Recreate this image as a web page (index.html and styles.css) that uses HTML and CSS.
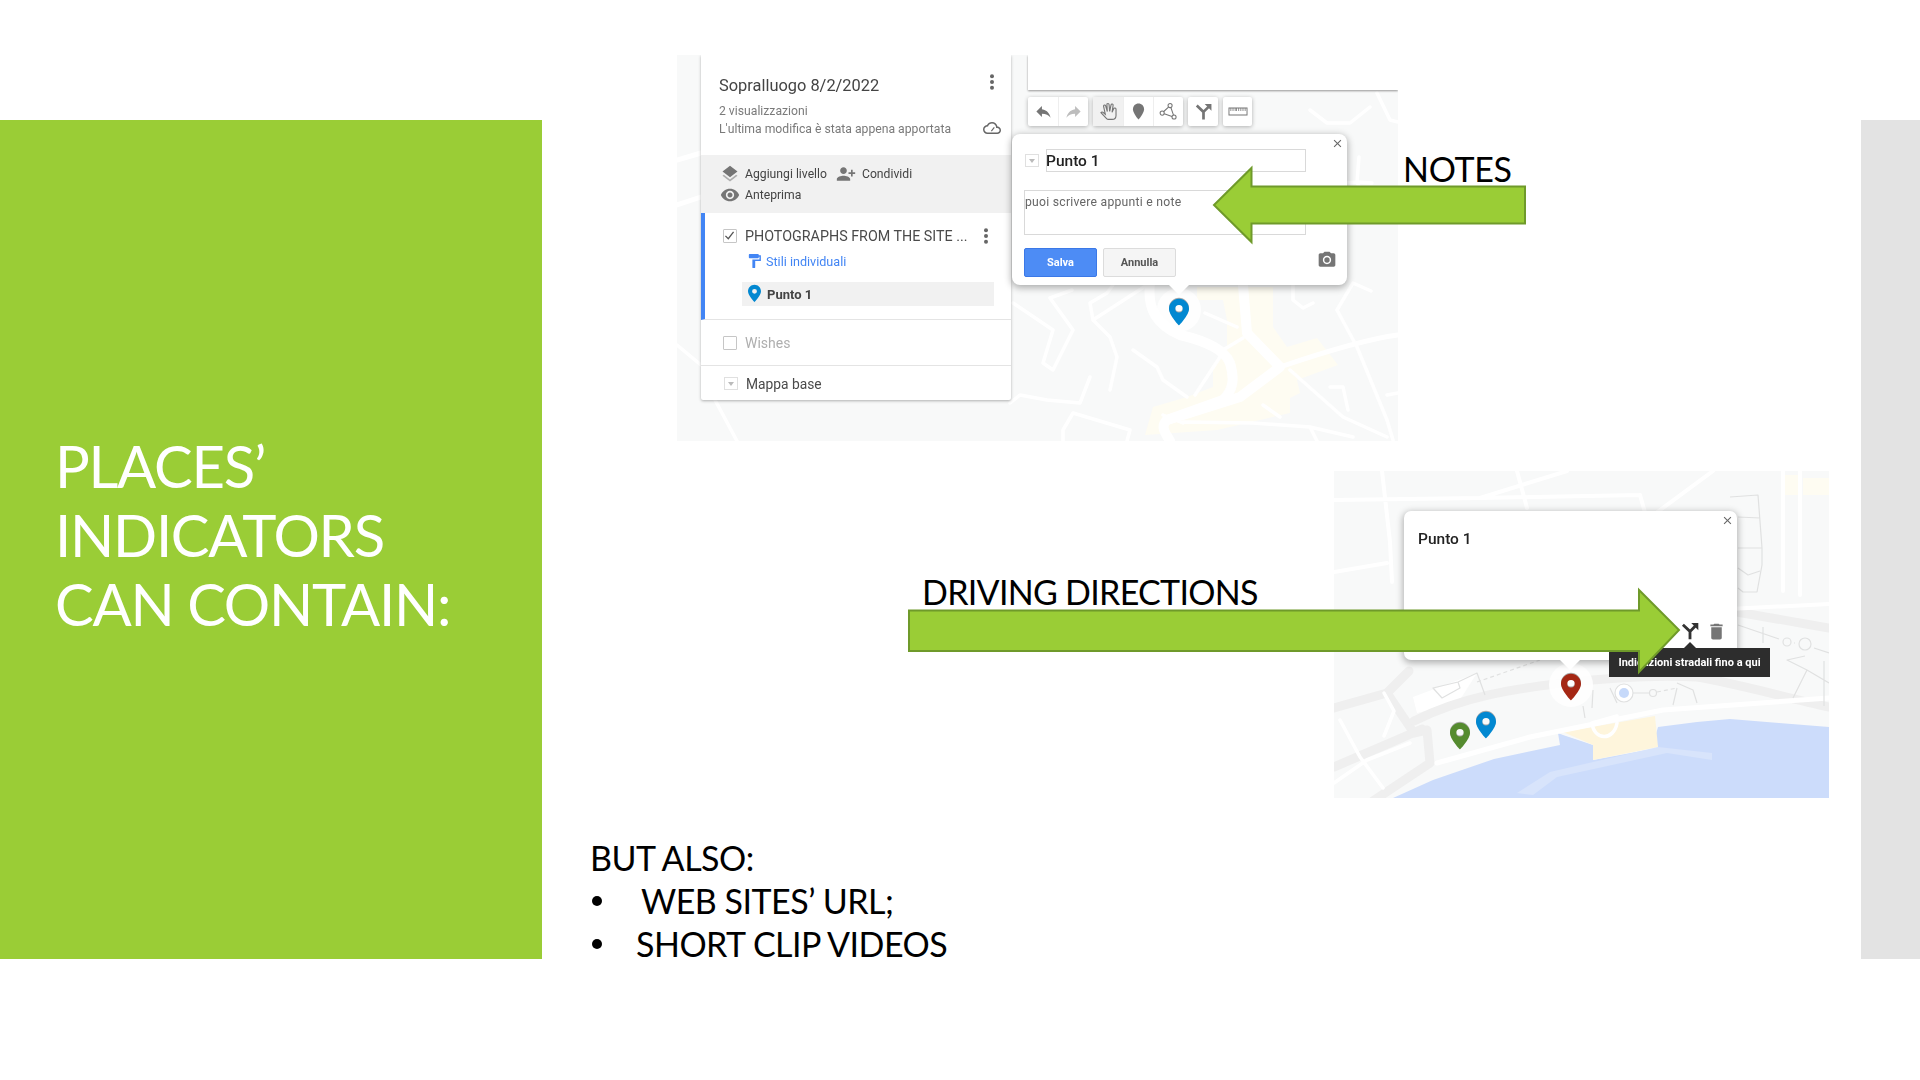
FILE: index.html
```html
<!DOCTYPE html>
<html lang="en">
<head>
<meta charset="utf-8">
<title>Places' indicators</title>
<link rel="stylesheet" href="styles.css">
</head>
<body>
<svg class="defs" width="0" height="0" aria-hidden="true">
  <symbol id="i-more" viewBox="0 0 24 24"><circle cx="12" cy="5" r="2.4"/><circle cx="12" cy="12" r="2.4"/><circle cx="12" cy="19" r="2.4"/></symbol>
  <symbol id="i-cloud" viewBox="0 0 24 24"><path d="M19.35 10.04C18.67 6.59 15.64 4 12 4 9.11 4 6.6 5.64 5.35 8.04 2.34 8.36 0 10.91 0 14c0 3.31 2.69 6 6 6h13c2.76 0 5-2.24 5-5 0-2.64-2.05-4.78-4.65-4.96zM19 18H6c-2.21 0-4-1.79-4-4s1.79-4 4-4h.71C7.37 7.69 9.48 6 12 6c3.04 0 5.5 2.46 5.5 5.5v.5H19c1.66 0 3 1.34 3 3s-1.34 3-3 3z"/><path d="M10.5 15.5l4-5 1.2 1-4 5.2z"/></symbol>
  <symbol id="i-layers" viewBox="0 0 24 24"><path opacity=".55" d="M11.99 18.54l-7.37-5.73L3 14.07l9 7 9-7-1.63-1.27-7.38 5.74z"/><path d="M12 16l7.36-5.73L21 9l-9-7-9 7 1.63 1.27L12 16z"/></symbol>
  <symbol id="i-person" viewBox="0 0 24 24"><path transform="matrix(-1 0 0 1 24 0)" d="M15 12c2.21 0 4-1.79 4-4s-1.79-4-4-4-4 1.79-4 4 1.79 4 4 4zm-9-2V7H4v3H1v2h3v3h2v-3h3v-2H6zm9 4c-2.67 0-8 1.34-8 4v2h16v-2c0-2.66-5.33-4-8-4z"/></symbol>
  <symbol id="i-eye" viewBox="0 0 24 24"><path d="M12 4.5C7 4.5 2.73 7.61 1 12c1.73 4.39 6 7.5 11 7.5s9.27-3.11 11-7.5c-1.73-4.39-6-7.5-11-7.5zM12 17c-2.76 0-5-2.24-5-5s2.24-5 5-5 5 2.24 5 5-2.24 5-5 5zm0-8c-1.66 0-3 1.34-3 3s1.34 3 3 3 3-1.34 3-3-1.34-3-3-3z"/></symbol>
  <symbol id="i-paint" viewBox="0 0 24 24"><path d="M18 4V3c0-.55-.45-1-1-1H5c-.55 0-1 .45-1 1v4c0 .55.45 1 1 1h12c.55 0 1-.45 1-1V6h1v4H9v11c0 .55.45 1 1 1h2c.55 0 1-.45 1-1v-9h8V4h-3z"/></symbol>
  <symbol id="i-pin" viewBox="0 0 24 32"><path fill-rule="evenodd" d="M12 0C5.4 0 0 5.3 0 12c0 8 12 20 12 20s12-12 12-20C24 5.3 18.6 0 12 0zm0 16.5a4.5 4.5 0 1 1 0-9 4.5 4.5 0 0 1 0 9z"/></symbol>
  <symbol id="i-reply" viewBox="0 0 24 24"><path d="M10 9V5l-7 7 7 7v-4.1c5 0 8.5 1.6 11 5.1-1-5-4-10-11-11z"/></symbol>
  <symbol id="i-fwd" viewBox="0 0 24 24"><path d="M14 9V5l7 7-7 7v-4.1c-5 0-8.5 1.6-11 5.1 1-5 4-10 11-11z"/></symbol>
  <symbol id="i-hand" viewBox="0 0 24 24"><path fill="none" stroke="currentColor" stroke-width="1.4" d="M21.5 9v8c0 3-2.3 5-5 5H12c-1 0-2-.5-2.700-1.300L2.500 13.500c.6-.8 1.600-1 2.400-.5L8 15.500 5.800 5.500c-.4-1.800 2.100-2.300 2.600-.5L10.500 12 10 3.300c-.1-1.900 2.600-2 2.700-.1L13.500 12l1.700-8.300c.4-1.800 3-1.300 2.600.5L16.500 13l2-4.500c.7-1.600 3-.9 3 .5z"/></symbol>
  <symbol id="i-drop" viewBox="0 0 24 24"><path d="M12 2C8.130 2 5 5.130 5 9c0 5.250 7 13 7 13s7-7.750 7-13c0-3.870-3.130-7-7-7z"/></symbol>
  <symbol id="i-poly" viewBox="0 0 24 24"><g fill="none" stroke="currentColor" stroke-width="1.3"><circle cx="14" cy="4.500" r="2.600"/><circle cx="4" cy="14" r="2.600"/><circle cx="19" cy="19" r="2.600"/><path d="M12 6.500 6 12M15 7l3.300 9.500M6.600 14.800 16.400 18.200"/></g></symbol>
  <symbol id="i-fork" viewBox="0 0 24 24"><path fill="none" stroke="currentColor" stroke-width="3.4" d="M3.500 4.500l8.500 8V22M12 12.500l7-7"/><path d="M13.500 2.500H22V11z"/></symbol>
  <symbol id="i-ruler" viewBox="0 0 24 24"><path fill-rule="evenodd" d="M0 7h24v10H0zm1.200 1.200v7.600h21.600V8.200h-1.300v3.300h-1V8.200h-1.700v3.300h-1V8.200h-1.700v3.300h-1V8.200h-1.700v3.300h-1V8.200h-1.700v3.300h-1V8.200H8.900v3.300h-1V8.200H6.200v3.300h-1V8.200H3.500v3.300h-1V8.200z"/></symbol>
  <symbol id="i-camera" viewBox="0 0 24 24"><path d="M9 2L7.170 4H4c-1.100 0-2 .9-2 2v12c0 1.100.9 2 2 2h16c1.100 0 2-.9 2-2V6c0-1.100-.9-2-2-2h-3.170L15 2H9zm3 15c-2.760 0-5-2.240-5-5s2.240-5 5-5 5 2.240 5 5-2.240 5-5 5z"/><circle cx="12" cy="12" r="3.200"/></symbol>
  <symbol id="i-close" viewBox="0 0 24 24"><path d="M19 6.410L17.590 5 12 10.590 6.410 5 5 6.410 10.590 12 5 17.590 6.410 19 12 13.410 17.590 19 19 17.590 13.410 12z"/></symbol>
  <symbol id="i-trash" viewBox="0 0 24 24"><path d="M6 19c0 1.100.9 2 2 2h8c1.100 0 2-.9 2-2V7H6v12zM19 4h-3.500l-1-1h-5l-1 1H5v2h14V4z"/></symbol>
</svg>

<main class="slide">
  <aside class="panel">
    <h1 class="panel-title">PLACES’<br>INDICATORS<br>CAN CONTAIN:</h1>
  </aside>
  <div class="edge"></div>

  <section class="shot shot-a">
    <svg class="roads" viewBox="0 0 721 386" preserveAspectRatio="none" aria-hidden="true">
      <path class="area-y" d="M520 232 596 232 596 272 610 292 640 283 661 310 620 325 623 338 613 343 613 358 540 375 468 380 476 352 510 342 536 332 536 312 550 292 550 265 546 245 520 245z"/>
      <g class="road">
        <path d="M473 228C470 255 480 270 503 280 530 286 548 296 553 308 558 325 556 335 546 345L490 365C482 372 490 380 493 386"/>
        <path d="M566 230 570 278 603 312 563 342 490 365"/>
      </g>
      <g class="road mid">
        <path d="M603 312C650 296 690 284 721 280"/>
        <path d="M0 105 24 98M0 150 24 142"/>
      </g>
      <g class="road thin">
        <path d="M613 315 666 362 710 382M680 292 710 365 716 385M660 255 676 228 694 236M660 255 680 292"/>
        <path d="M546 295 566 283M543 302 518 340M456 295 480 312 486 325 510 342"/>
        <path d="M416 265 433 282 440 302 433 335M416 265 413 248 430 238 436 230M416 265 470 230"/>
        <path d="M373 243 396 275 376 315 366 308 376 275 336 248M373 243 395 235"/>
        <path d="M413 322 403 348 370 345 343 340 333 348M396 358 453 375 450 386M396 358 386 375 386 386"/>
        <path d="M486 360 506 368M586 350 603 362M506 367 576 368 633 372 676 382M633 372 640 386"/>
        <path d="M616 230 616 245 626 253 636 248M653 332 666 332 671 355M710 340 721 338M528 258 560 272"/>
        <path d="M700 38 713 65 721 67M633 55 650 68 673 68 693 52M682 102 680 127 668 128M680 127 695 128M680 127 690 150M30 180 50 200 60 250M0 290 24 310M60 386 30 330"/>
      </g>
      <circle class="halo" cx="502" cy="255" r="22"/>
    </svg>

    <div class="sidebar">
      <header class="doc">
        <div class="doc-row doc-row-title">
          <h2 class="doc-title">Sopralluogo 8/2/2022</h2>
          <svg class="ico dots"><use href="#i-more"/></svg>
        </div>
        <p class="doc-meta">2 visualizzazioni</p>
        <div class="doc-row">
          <p class="doc-meta">L'ultima modifica è stata appena apportata</p>
          <svg class="ico cloud"><use href="#i-cloud"/></svg>
        </div>
      </header>
      <div class="actions">
        <div class="action-row">
          <svg class="ico act"><use href="#i-layers"/></svg><span>Aggiungi livello</span>
          <svg class="ico act person"><use href="#i-person"/></svg><span>Condividi</span>
        </div>
        <div class="action-row">
          <svg class="ico act"><use href="#i-eye"/></svg><span>Anteprima</span>
        </div>
      </div>
      <div class="layer">
        <div class="layer-head">
          <span class="check on"><svg viewBox="0 0 16 16"><path d="M3 8.500 6.500 12 13 3.500"/></svg></span>
          <span class="layer-name">PHOTOGRAPHS FROM THE SITE ...</span>
          <svg class="ico dots"><use href="#i-more"/></svg>
        </div>
        <div class="styles-link"><svg class="ico paint"><use href="#i-paint"/></svg><span>Stili individuali</span></div>
        <div class="place"><svg class="ico place-pin"><use href="#i-pin"/></svg><span>Punto 1</span></div>
      </div>
      <div class="wishes"><span class="check"></span><span>Wishes</span></div>
      <div class="basemap"><span class="caret"></span><span>Mappa base</span></div>
    </div>

    <div class="searchbar"></div>
    <div class="tools">
      <div class="tool-group">
        <span class="tool"><svg class="ico"><use href="#i-reply"/></svg></span>
        <span class="tool faded"><svg class="ico"><use href="#i-fwd"/></svg></span>
      </div>
      <div class="tool-group">
        <span class="tool active"><svg class="ico"><use href="#i-hand"/></svg></span>
        <span class="tool"><svg class="ico"><use href="#i-drop"/></svg></span>
        <span class="tool"><svg class="ico"><use href="#i-poly"/></svg></span>
      </div>
      <div class="tool-group">
        <span class="tool"><svg class="ico"><use href="#i-fork"/></svg></span>
      </div>
      <div class="tool-group">
        <span class="tool wide"><svg class="ico"><use href="#i-ruler"/></svg></span>
      </div>
    </div>

    <div class="editor">
      <svg class="ico close"><use href="#i-close"/></svg>
      <div class="editor-title"><span class="caret"></span><div class="field title-field">Punto 1</div></div>
      <div class="field note-field">puoi scrivere appunti e note</div>
      <div class="editor-actions">
        <span class="btn primary">Salva</span>
        <span class="btn">Annulla</span>
        <svg class="ico camera"><use href="#i-camera"/></svg>
      </div>
      <span class="tail"></span>
    </div>
    <svg class="ico marker marker-a"><use href="#i-pin"/></svg>
  </section>

  <section class="shot shot-b">
    <svg class="roads" viewBox="0 0 495 327" preserveAspectRatio="none" aria-hidden="true">
      <path class="blockish" d="M451 4H464V24H451zM469 7H495V24H469z"/>
      <path class="water" d="M59 327 99 309 160 288 226 274 224 262 229 264 259 274 259 289 324 277 321 266 324 256 363 251 396 248 495 256V327z"/>
      <path class="sand" d="M229 261 321 245 324 276 259 289 259 274z"/>
      <path class="pale" d="M183 322 216 301 324 276 378 282 378 289 333 282 223 306 199 324z"/>
      <path class="white-block" d="M79 226 143 202 124 232 83 242z"/>
      <g class="road gray">
        <path d="M0 237 53 222 80 262 93 259 96 292 39 330"/>
        <path d="M53 222 75 200M80 250C130 225 180 218 229 212 290 205 330 204 363 206 400 212 450 226 495 236"/>
        <path d="M0 296 56 272 88 258"/>
        <path d="M403 141 495 157"/>
      </g>
      <g class="road mid">
        <path d="M103 292 196 266 329 239 495 227"/>
      </g>
      <g class="road">
        <path class="r6" d="M48 0 56 71 58 111M0 29 146 27 233 0M183 0 193 37M146 27 306 24M306 24 312 45M379 0 318 45M449 0V120M466 0V124M0 101 53 92M395 138 495 133"/>
      </g>
      <g class="road thin">
        <path d="M6 249 26 286 49 317M0 312 33 289 76 272M258 252C260 270 280 270 283 252M258 252 283 245"/>
        <path d="M50 222 60 240 50 265"/>
      </g>
      <g class="road line">
        <path d="M396 26 424 24 428 77 428 94 423 121 409 121 404 117M404 46 426 47M404 77 428 77M404 97 414 104 426 100"/>
        <path d="M404 154 445 168M461 172 460 172M480 177 495 182M429 156V172M471 185 453 189 473 199 495 212M473 199 459 227M490 190V235"/>
        <path d="M99 217 124 211 126 217 108 227zM124 211 143 202 151 224"/>
        <path stroke-dasharray="4 3" d="M143 211 206 189"/>
        <path d="M259 219 258 237M276 217 283 232M298 222 315 222M343 212 359 219 363 232M343 217 339 234M249 235 251 247"/>
        <path stroke-dasharray="4 3" d="M323 221 343 217"/>
        <circle cx="319" cy="222" r="3.500"/>
        <circle cx="453" cy="171" r="4"/>
        <circle cx="471" cy="173" r="6"/>
      </g>
      <circle class="pond-ring" cx="290" cy="222" r="9"/>
      <circle class="pond" cx="290" cy="222" r="5"/>
      <circle class="halo" cx="237" cy="214" r="22"/>
    </svg>
    <div class="popup">
      <svg class="ico close"><use href="#i-close"/></svg>
      <h3 class="popup-title">Punto 1</h3>
      <div class="popup-actions">
        <svg class="ico fork"><use href="#i-fork"/></svg>
        <svg class="ico trash"><use href="#i-trash"/></svg>
      </div>
      <span class="tail"></span>
    </div>
    <div class="tooltip">Indicazioni stradali fino a qui</div>
    <svg class="ico marker marker-red"><use href="#i-pin"/></svg>
    <svg class="ico marker marker-blue"><use href="#i-pin"/></svg>
    <svg class="ico marker marker-green"><use href="#i-pin"/></svg>
  </section>

  <svg class="arrow arrow-left" viewBox="0 0 313 76" aria-hidden="true"><path d="M312 19.500H38.500V1L1 38 38.500 75V56.500H312z"/></svg>
  <svg class="arrow arrow-right" viewBox="0 0 772 84" aria-hidden="true"><path d="M1 21.500H731V1L771 41 731 83V62H1z"/></svg>

  <p class="label label-notes">NOTES</p>
  <p class="label label-driving">DRIVING DIRECTIONS</p>

  <div class="notes">
    <p class="notes-lead">BUT ALSO:</p>
    <ul class="notes-list">
      <li class="item-web">WEB SITES’ URL;</li>
      <li class="item-clip">SHORT CLIP VIDEOS</li>
    </ul>
  </div>
</main>
</body>
</html>
```

FILE: styles.css
```css
* { box-sizing: border-box; }
html, body { margin: 0; padding: 0; background: #fff; }
.defs { position: absolute; }
p, h1, h2, h3, ul { margin: 0; padding: 0; }

.slide {
  position: relative;
  width: 1920px;
  height: 1080px;
  overflow: hidden;
  background: #fff;
  font-family: Lato, "Open Sans", sans-serif;
  font-weight: 400;
  color: #000;
}

/* slide canvas objects */
.panel {
  position: absolute;
  left: 0; top: 120px;
  width: 542px; height: 839px;
  background: #9acd36;
  display: flex;
  align-items: center;
  padding-left: 55px;
}
.panel-title {
  font-size: 58px;
  line-height: 69px;
  font-weight: 400;
  color: #fff;
  letter-spacing: -1.25px;
  margin-top: -10px;
}
.edge {
  position: absolute;
  left: 1861px; top: 120px;
  width: 59px; height: 839px;
  background: #e3e3e3;
}
.label {
  position: absolute;
  font-size: 34px;
  line-height: 40px;
  white-space: nowrap;
}
.label-notes { left: 1403px; top: 149px; letter-spacing: -0.3px; }
.label-driving { left: 922px; top: 572px; letter-spacing: -0.7px; }
.arrow {
  position: absolute;
  overflow: visible;
}
.arrow path { fill: #9acd36; stroke: #6f9a2a; stroke-width: 2; }
.arrow-left { left: 1213px; top: 167px; width: 313px; height: 76px; }
.arrow-right { left: 908px; top: 589px; width: 772px; height: 84px; }

.notes {
  position: absolute;
  left: 590px; top: 836px;
  font-size: 34px;
  line-height: 43px;
  letter-spacing: -0.5px;
}
.notes-list { list-style: none; }
.notes-list li { position: relative; }
.notes-list li::before {
  content: "";
  position: absolute;
  left: 2px; top: 17px;
  width: 10px; height: 10px;
  border-radius: 50%;
  background: #000;
}
.item-web { padding-left: 51px; }
.item-clip { padding-left: 46px; }

/* screenshots */
.shot {
  position: absolute;
  overflow: hidden;
  background: #f8f9f9;
  font-family: Roboto, sans-serif;
  font-weight: 400;
  filter: blur(.35px);
}
.shot-a { left: 677px; top: 55px; width: 721px; height: 386px; }
.shot-b { left: 1334px; top: 471px; width: 495px; height: 327px; }
.roads { position: absolute; inset: 0; width: 100%; height: 100%; }
.road path { fill: none; stroke: #fff; stroke-width: 10; stroke-linejoin: round; stroke-linecap: round; }
.road.mid path { stroke-width: 5; }
.road .r6 { stroke-width: 4; }
.road.thin path { stroke-width: 3.5; }
.road.gray path { stroke: #efefef; stroke-width: 9; }
.road.line path { stroke: #e0e1e1; stroke-width: 1.2; stroke-linecap: butt; }
.road.line circle { fill: none; stroke: #e0e1e1; stroke-width: 1.2; }
.area-y { fill: #fefcf2; }
.blockish { fill: #fefcf2; }
.white-block { fill: #fff; }
.halo { fill: #fff; opacity: .85; }
.water { fill: #ccdcfb; }
.sand { fill: #fef5dc; }
.pale { fill: #d8e4fb; }
.pond { fill: #c6d9fa; }
.pond-ring { fill: #fff; stroke: #e0e1e1; stroke-width: 1.2; }

.ico { display: block; fill: #757575; color: #757575; flex: none; }

.sidebar {
  position: absolute;
  left: 24px; top: 0;
  width: 310px; height: 345px;
  background: #fff;
  box-shadow: 0 1px 3px rgba(0,0,0,.3);
  border-radius: 0 0 2px 2px;
  display: flex;
  flex-direction: column;
  color: #3c3c3c;
}
.doc {
  height: 100px;
  padding: 20px 9px 0 18px;
}
.doc-row { display: flex; align-items: center; justify-content: space-between; }
.doc-row-title { margin-bottom: 5px; }
.doc-title { font-size: 16.4px; font-weight: 400; line-height: 22px; color: #444; }
.doc-row-title .dots { margin: -9px 0 0 0; }
.doc-meta { font-size: 12.2px; line-height: 18px; color: #7a7a7a; }
.dots { width: 20px; height: 20px; fill: #666; }
.cloud { width: 18px; height: 18px; margin-top: -3px; margin-right: 1px; fill: #666; }
.actions {
  height: 58px;
  background: #f1f1f1;
  padding: 8px 0 0 19px;
  font-size: 12.2px;
  color: #444;
}
.action-row { display: flex; align-items: center; height: 21px; }
.act { width: 20px; height: 20px; margin-right: 5px; }
.person { margin-left: 9px; margin-right: 6px; }
.layer {
  height: 107px;
  border-left: 4px solid #4285f4;
  border-bottom: 1px solid #e4e4e4;
  padding: 11px 0 0 18px;
}
.layer-head {
  display: flex;
  align-items: center;
  height: 23px;
  font-size: 14px;
}
.check {
  width: 14px; height: 14px;
  border: 1.5px solid #c6c6c6;
  border-radius: 1px;
  margin-right: 8px;
  flex: none;
  display: flex;
}
.check svg { width: 13px; height: 13px; margin: -1px; fill: none; stroke: #555; stroke-width: 1.6; }
.layer-name { width: 231px; white-space: nowrap; color: #4a4a4a; font-size: 14.3px; }
.styles-link {
  display: flex;
  align-items: center;
  height: 20px;
  margin: 4px 0 0 23px;
  font-size: 12.6px;
  color: #4285f4;
  gap: 3px;
}
.paint { width: 17px; height: 18px; fill: #4285f4; }
.place {
  display: flex;
  align-items: center;
  gap: 6px;
  width: 252px; height: 24px;
  margin: 11px 0 0 19px;
  padding-left: 6px;
  background: #f1f1f1;
  font-size: 13px;
  font-weight: 700;
  color: #444;
}
.place-pin { width: 13px; height: 19px; fill: #0288d1; margin-top: -2px; }
.wishes {
  height: 46px;
  border-bottom: 1px solid #e4e4e4;
  display: flex;
  align-items: center;
  padding-left: 22px;
  font-size: 14px;
  color: #aeaeae;
}
.basemap {
  flex: 1;
  display: flex;
  align-items: center;
  padding-left: 23px;
  padding-top: 1px;
  font-size: 13.8px;
  color: #4a4a4a;
}
.caret {
  position: relative;
  width: 14px; height: 13px;
  border: 1px solid #e0e0e0;
  margin-right: 8px;
  flex: none;
}
.caret::after {
  content: "";
  position: absolute;
  left: 3px; top: 4px;
  border: 3px solid transparent;
  border-top: 4px solid #bbb;
}
.searchbar {
  position: absolute;
  left: 351px; top: 0;
  width: 370px; height: 35px;
  background: #fff;
  box-shadow: 0 1px 2px rgba(0,0,0,.4);
}
.tools {
  position: absolute;
  left: 351px; top: 42px;
  display: flex;
  gap: 5px;
}
.tool-group {
  display: flex;
  background: #fff;
  border-radius: 2px;
  box-shadow: 0 1px 4px rgba(0,0,0,.3);
}
.tool {
  width: 30px; height: 29px;
  display: flex;
  align-items: center;
  justify-content: center;
  border-left: 1px solid #eee;
}
.tool:first-child { border-left: 0; }
.tool .ico { width: 19px; height: 19px; }
.tool.active { background: #f1f1f1; }
.tool.faded .ico { fill: #bdbdbd; }
.tool.wide { width: 29px; }
.tool.wide .ico { width: 20px; }
.editor {
  position: absolute;
  left: 335px; top: 79px;
  width: 335px; height: 151px;
  background: #fff;
  border-radius: 8px;
  box-shadow: 0 2px 7px 1px rgba(0,0,0,.3);
  padding: 15px 0 0 12px;
}
.close { position: absolute; width: 13px; height: 13px; right: 3px; top: 3px; fill: #666; }
.editor-title { display: flex; align-items: center; margin-left: 1px; }
.field { border: 1px solid #d9d9d9; width: 260px; color: #222; }
.title-field {
  height: 23px;
  font-size: 15.5px;
  font-weight: 500;
  line-height: 23px;
  padding-left: 0;
  margin-left: -1px;
  text-indent: -1px;
}
.note-field {
  width: 282px; height: 45px;
  margin-top: 18px;
  font-size: 12.2px;
  line-height: 22px;
  color: #666;
  padding-left: 0;
  letter-spacing: .25px;
}
.editor-actions { display: flex; align-items: center; gap: 6px; margin-top: 13px; position: relative; }
.btn {
  width: 73px; height: 29px;
  display: flex;
  align-items: center;
  justify-content: center;
  font-size: 11px;
  font-weight: 700;
  color: #555;
  background: #f5f5f5;
  border: 1px solid #dcdcdc;
  border-radius: 2px;
}
.btn.primary { background: #4d8cf5; border-color: #3b78e7; color: #fff; }
.camera { position: absolute; left: 293px; top: 2px; width: 20px; height: 20px; }
.tail {
  position: absolute;
  left: 156px; bottom: -10px;
  width: 0; height: 0;
  border: 11px solid transparent;
  border-bottom: 0;
  border-top: 11px solid #fff;
}
.marker { position: absolute; width: 20px; height: 28px; filter: drop-shadow(0 -1px 0 #aaa); }
.marker-a { left: 492px; top: 243px; fill: #0288d1; }

.popup {
  position: absolute;
  left: 70px; top: 40px;
  width: 333px; height: 149px;
  background: #fff;
  border-radius: 7px;
  box-shadow: 0 2px 7px 1px rgba(0,0,0,.3);
  padding: 18px 0 0 14px;
}
.popup-title { font-size: 15.5px; font-weight: 500; line-height: 20px; color: #222; }
.popup-actions { position: absolute; left: 276px; top: 110px; display: flex; gap: 6px; }
.fork { width: 20px; height: 20px; fill: #333; color: #333; }
.trash { width: 21px; height: 21px; }
.popup .tail { left: 155px; }
.tooltip {
  position: absolute;
  left: 275px; top: 177px;
  width: 161px; height: 29px;
  background: #2d2d2d;
  color: #fff;
  font-size: 11px;
  font-weight: 700;
  line-height: 29px;
  text-align: center;
  white-space: nowrap;
}
.tooltip::before {
  content: "";
  position: absolute;
  left: 75px; top: -6px;
  border: 6px solid transparent;
  border-top: 0;
  border-bottom: 6px solid #2d2d2d;
}
.marker-red { left: 227px; top: 202px; fill: #a52714; }
.marker-blue { left: 142px; top: 240px; fill: #0288d1; }
.marker-green { left: 116px; top: 251px; fill: #558b2f; }
```
